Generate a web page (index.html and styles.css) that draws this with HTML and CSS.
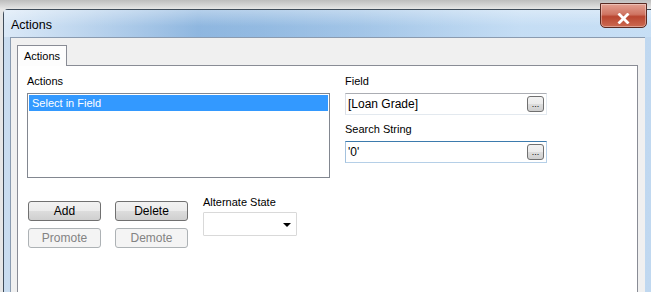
FILE: index.html
```html
<!DOCTYPE html>
<html>
<head>
  <title>Actions</title>
  <link rel="stylesheet" href="styles.css">
</head>
<body>
  <div class="window">
    <div class="titlebar">
      <span class="title">Actions</span>
      <button class="close-btn" title="Close">
        <svg width="13" height="11" viewBox="0 0 13 11">
          <path d="M2.5 1.5 L10.5 9.5 M10.5 1.5 L2.5 9.5" stroke="#fff" stroke-width="2.8" stroke-linecap="square"/>
        </svg>
      </button>
    </div>

    <div class="panel">
      <div class="tabs">
        <div class="tab active">Actions</div>
      </div>

      <div class="tab-body">
        <div class="top-row">
          <div class="col-left">
            <label class="lbl">Actions</label>
            <div class="listbox">
              <div class="list-item selected">Select in Field</div>
            </div>
          </div>

          <div class="col-right">
            <label class="lbl">Field</label>
            <div class="field-input">
              <span class="value">[Loan Grade]</span>
              <button class="dots">...</button>
            </div>
            <label class="lbl lbl-search">Search String</label>
            <div class="field-input focused">
              <span class="value">'0'</span>
              <button class="dots">...</button>
            </div>
          </div>
        </div>

        <div class="bottom-row">
          <div class="btn-grid">
            <button class="btn">Add</button>
            <button class="btn">Delete</button>
            <button class="btn" disabled>Promote</button>
            <button class="btn" disabled>Demote</button>
          </div>
          <div class="alt-state">
            <label class="lbl">Alternate State</label>
            <div class="dropdown">
              <span class="arrow"></span>
            </div>
          </div>
        </div>
      </div>
    </div>
  </div>
</body>
</html>
```

FILE: styles.css
```css
body, html {
  margin: 0;
  height: 100%;
  overflow: hidden;
}

* {
  box-sizing: border-box;
}

body {
  background: linear-gradient(#bdbdbd, #e6e6e6 9px, #e6e6e6);
  padding: 9px 0 0 3px;
  font-family: "Liberation Sans", Arial, sans-serif;
  font-size: 11px;
  color: #000;
}

.window {
  position: relative;
  height: 283px;
  border: 1px solid #3f4c5a;
  border-right: none;
  border-bottom: none;
  border-radius: 5px 0 0 0;
  background: linear-gradient(90deg, #c9dcef 0%, #a9c8e6 40%, #c0d8f0 100%);
  padding: 0 6px;
}

.titlebar {
  height: 27px;
  display: flex;
  align-items: center;
  background: linear-gradient(180deg, rgba(255,255,255,0.35), rgba(255,255,255,0) 60%),
              linear-gradient(90deg, rgba(220,234,248,0.9) 0%, rgba(120,168,218,0.6) 30%, rgba(150,190,230,0.5) 55%, rgba(200,224,246,0.8) 80%);
  margin: 0 -6px;
  padding: 0 7px;
}

.title {
  font-size: 12.5px;
  color: #000;
  margin-top: 2px;
}

.close-btn {
  position: absolute;
  top: -7px;
  right: 4px;
  width: 47px;
  height: 25px;
  border: 1px solid #5a2a22;
  border-radius: 0 0 5px 5px;
  background: linear-gradient(#e3a192, #cf7462 45%, #b94630 55%, #cc6a52);
  box-shadow: inset 0 0 0 1px rgba(255,255,255,0.35);
  display: flex;
  align-items: center;
  justify-content: center;
  padding: 5px 0 0 0;
}

.panel {
  background: #f0f0f0;
  border: 1px solid #8a9bb0;
  border-right: none;
  border-bottom: none;
  height: 255px;
  padding: 7px 7px 0 6px;
}

.tabs {
  display: flex;
  height: 20px;
}

.tab {
  width: 50px;
  height: 21px;
  border: 1px solid #898c95;
  border-bottom: none;
  background: #fdfdfd;
  text-align: center;
  line-height: 20px;
  position: relative;
  z-index: 1;
}

.tab-body {
  background: #fff;
  border: 1px solid #898c95;
  border-bottom: none;
  height: 227px;
  padding: 8px 0 0 9px;
}

.top-row {
  display: flex;
  gap: 15px;
}

.col-left {
  width: 303px;
}

.col-right {
  width: 202px;
}

.lbl {
  display: block;
  line-height: 14px;
  height: 14px;
  margin-bottom: 5px;
}

.listbox {
  height: 85px;
  border: 1px solid #828790;
  padding: 1px;
}

.list-item {
  height: 16px;
  line-height: 16px;
  padding-left: 3px;
}

.list-item.selected {
  background: #3399ff;
  color: #fff;
}

.field-input {
  height: 22px;
  border: 1px solid #e3e9ef;
  border-top-color: #abadb3;
  border-left-color: #dbdfe6;
  display: flex;
  align-items: center;
  justify-content: space-between;
  padding: 0 2px;
}

.field-input.focused {
  border-color: #b5cfe7;
  border-top-color: #3d7bad;
  border-left-color: #a4c2de;
}

.value {
  font-size: 12px;
}

.lbl-search {
  margin-top: 7px;
}

.dots {
  width: 17px;
  height: 16px;
  border: 1px solid #707070;
  border-radius: 3px;
  background: linear-gradient(#f2f2f2, #ebebeb 50%, #dddddd 50%, #cfcfcf);
  font: 9px "Liberation Sans", Arial, sans-serif;
  line-height: 14px;
  padding: 0;
  text-align: center;
}

.bottom-row {
  display: flex;
  margin-top: 23px;
  gap: 15px;
}

.btn-grid {
  display: grid;
  grid-template-columns: 73px 73px;
  column-gap: 14px;
  row-gap: 7px;
  margin-left: 1px;
}

.btn {
  height: 20px;
  border: 1px solid #707070;
  border-radius: 3px;
  background: linear-gradient(#f2f2f2, #ebebeb 50%, #dddddd 50%, #cfcfcf);
  font: 12px "Liberation Sans", Arial, sans-serif;
  color: #000;
  padding: 0;
}

.btn:disabled {
  border-color: #adb2b5;
  background: #f4f4f4;
  color: #838383;
}

.alt-state {
  margin-top: -6px;
}

.alt-state .lbl {
  margin-bottom: 3px;
}

.dropdown {
  width: 94px;
  height: 24px;
  border: 1px solid #d9d9d9;
  border-radius: 1px;
  position: relative;
}

.arrow {
  position: absolute;
  right: 5px;
  top: 10px;
  border-left: 4px solid transparent;
  border-right: 4px solid transparent;
  border-top: 4px solid #000;
}
```
